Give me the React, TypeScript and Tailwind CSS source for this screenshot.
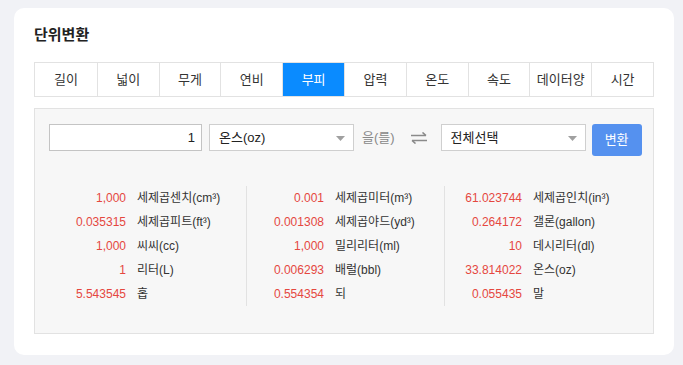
import React from 'react';

const tabs = ['길이', '넓이', '무게', '연비', '부피', '압력', '온도', '속도', '데이터양', '시간'];

const columns: [string, string][][] = [
  [
    ['1,000', '세제곱센치(cm³)'],
    ['0.035315', '세제곱피트(ft³)'],
    ['1,000', '씨씨(cc)'],
    ['1', '리터(L)'],
    ['5.543545', '홉'],
  ],
  [
    ['0.001', '세제곱미터(m³)'],
    ['0.001308', '세제곱야드(yd³)'],
    ['1,000', '밀리리터(ml)'],
    ['0.006293', '배럴(bbl)'],
    ['0.554354', '되'],
  ],
  [
    ['61.023744', '세제곱인치(in³)'],
    ['0.264172', '갤론(gallon)'],
    ['10', '데시리터(dl)'],
    ['33.814022', '온스(oz)'],
    ['0.055435', '말'],
  ],
];

function Caret() {
  return (
    <svg width="9" height="5" viewBox="0 0 9 5" className="absolute right-[8px] top-[11px]">
      <path d="M0 0h9L4.5 5z" fill="#a0a0a0" />
    </svg>
  );
}

function SwapIcon() {
  return (
    <svg width="18" height="12" viewBox="0 0 18 12" fill="none" stroke="#8a8a8a" strokeWidth="1.6">
      <path d="M1 3.5h15M12.5 0.5l3.5 3" />
      <path d="M17 8.5H2M5.5 11.5L2 8.5" />
    </svg>
  );
}

export default function App() {
  return (
    <div
      className="min-h-screen bg-[#f1f2f6] pt-2 pl-[14px]"
      style={{ fontFamily: '"Liberation Sans", "Noto Sans CJK KR", sans-serif' }}
    >
      <div className="w-[660px] h-[347px] bg-white rounded-[10px] px-5 pt-[16px]">
        <h1 className="text-[15px] leading-[22px] font-bold text-[#222]">단위변환</h1>

        <div className="mt-[16px] grid grid-cols-10 h-[35px] border border-[#e2e2e2]">
          {tabs.map((t, i) => (
            <div
              key={t}
              className={
                'flex items-center justify-center text-[13px] ' +
                (i > 0 ? 'border-l border-[#e2e2e2] ' : '') +
                (t === '부피' ? 'bg-[#0a8bff] text-white' : 'text-[#333]')
              }
            >
              {t}
            </div>
          ))}
        </div>

        <div className="mt-[11px] h-[226px] bg-[#f7f7f7] border border-[#e2e2e2] px-[14px] pt-[15px]">
          <div className="flex items-start">
            <div className="shrink-0 w-[153px] h-[27px] bg-white border border-[#c4c4c4] flex items-center justify-end pr-[6px] text-[13px] text-[#222]">
              1
            </div>
            <div className="shrink-0 relative ml-[7px] w-[145px] h-[27px] bg-white border border-[#cfcfcf] flex items-center pl-[9px] text-[13px] text-[#222]">
              온스(oz)
              <Caret />
            </div>
            <span className="shrink-0 whitespace-nowrap ml-[8px] h-[27px] flex items-center text-[13px] text-[#888]">
              을(를)
            </span>
            <span className="shrink-0 ml-[15px] h-[27px] flex items-center">
              <SwapIcon />
            </span>
            <div className="shrink-0 relative ml-[13px] w-[145px] h-[27px] bg-white border border-[#cfcfcf] flex items-center pl-[9px] text-[13px] text-[#222]">
              전체선택
              <Caret />
            </div>
            <button className="shrink-0 ml-[6px] w-[50px] h-[32px] rounded-[3px] bg-[#5591ef] text-white text-[13px]">
              변환
            </button>
          </div>

          <div className="mt-[30px] grid grid-cols-3 w-[594px]">
            {columns.map((col, ci) => (
              <div key={ci} className={ci < 2 ? 'border-r border-[#e2e2e2]' : ''}>
                {col.map(([num, name]) => (
                  <div key={name} className="flex items-center h-[24px] text-[12px]">
                    <span className="w-[77px] text-right text-[#e5473f]">{num}</span>
                    <span className="ml-[11px] text-[#333]">{name}</span>
                  </div>
                ))}
              </div>
            ))}
          </div>
        </div>
      </div>
    </div>
  );
}
